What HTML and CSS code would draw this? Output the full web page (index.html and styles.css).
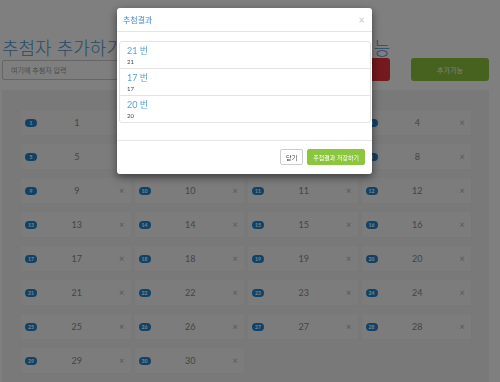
FILE: index.html
```html
<!DOCTYPE html>
<html lang="ko">
<head>
    <meta charset="UTF-8">
    <meta name="viewport" content="width=device-width, initial-scale=1.0">
    <title>추첨</title>
    <link rel="stylesheet" href="styles.css">
</head>
<body>
    <div class="page">
        <div class="top">
            <h1 class="title">추첨자 추가하기</h1>
            <h1 class="title title-draw">추첨기능</h1>
            <div></div>
            <input class="name-input" type="text" placeholder="여기에 추첨자 입력">
            <button class="btn btn-red">추첨하기</button>
            <button class="btn btn-green">추가기능</button>
        </div>

        <div class="well">
            <div class="card-grid" id="card-grid"></div>
        </div>
    </div>

    <!-- modal is open -->
    <div class="backdrop"></div>
    <div class="modal">
        <div class="modal-header">
            <span class="modal-title">추첨결과</span>
            <span class="modal-close">&times;</span>
        </div>
        <div class="modal-body">
            <div class="list-group">
                <div class="list-item">
                    <div class="item-heading">21 번</div>
                    <div class="item-text">21</div>
                </div>
                <div class="list-item">
                    <div class="item-heading">17 번</div>
                    <div class="item-text">17</div>
                </div>
                <div class="list-item">
                    <div class="item-heading">20 번</div>
                    <div class="item-text">20</div>
                </div>
            </div>
        </div>
        <div class="modal-footer">
            <button class="btn-sm btn-default">닫기</button>
            <button class="btn-sm btn-save">추첨결과 저장하기</button>
        </div>
    </div>

    <script>
        // build the 30 entries
        const grid = document.getElementById('card-grid');
        for (let i = 1; i <= 30; i++) {
            const card = document.createElement('div');
            card.className = 'card';
            card.innerHTML =
                '<span class="badge">' + i + '</span>' +
                '<span class="card-name">' + i + '</span>' +
                '<span class="card-remove">&times;</span>';
            grid.appendChild(card);
        }
    </script>
</body>
</html>
```

FILE: styles.css
```css
body {
    margin: 0;
    background-color: #ffffff;
    font-family: Lato, "Noto Sans CJK KR", sans-serif;
    color: #555;
}

.page {
    padding: 36px 11px 0 2px;
}

/* top controls */
.top {
    display: grid;
    grid-template-columns: minmax(0, 1fr) 70px 78px;
    column-gap: 21px;
}

.title {
    margin: 0;
    font-family: "Noto Sans CJK KR", sans-serif;
    font-size: 18px;
    font-weight: 300;
    line-height: 22px;
    color: #4f97d0;
    white-space: nowrap;
}

.title-draw {
    margin-left: 4px;
}

.name-input {
    align-self: center;
    height: 20px;
    box-sizing: border-box;
    border: 1px solid #ccc;
    border-radius: 2px;
    padding: 0 8px;
    font-family: "Noto Sans CJK KR", sans-serif;
    font-size: 7px;
    margin-top: 1px;
}

.name-input::placeholder {
    color: #999;
}

.btn {
    height: 23px;
    border: none;
    border-radius: 3px;
    color: #fff;
    font-family: "Noto Sans CJK KR", sans-serif;
    font-size: 7px;
}

.btn-red {
    background-color: #e8353c;
}

.btn-green {
    background-color: #8cc43c;
}

/* list of people */
.well {
    margin-top: 9px;
    background-color: #f3f3f3;
    padding: 19px 17px 20px 18px;
}

.card-grid {
    display: grid;
    grid-template-columns: repeat(4, 1fr);
    column-gap: 2px;
    row-gap: 7px;
}

.card {
    display: flex;
    align-items: center;
    height: 27px;
    background-color: #f8f8f8;
    border: 1px solid #f0f0f0;
    box-sizing: border-box;
    padding: 0 4px 0 4px;
}

.badge {
    min-width: 8px;
    padding: 1px 2px;
    border-radius: 4px;
    background-color: #2185d0;
    color: #fff;
    font-size: 5px;
    line-height: 6px;
    text-align: center;
    font-weight: 700;
}

.card-name {
    flex: 1;
    text-align: center;
    font-size: 9px;
    color: #8a8a8a;
}

.card-remove {
    width: 10px;
    text-align: center;
    font-size: 9px;
    color: #b0b0b0;
}

/* modal */
.backdrop {
    position: fixed;
    inset: 0;
    background-color: rgba(0, 0, 0, 0.5);
}

.modal {
    position: fixed;
    left: 117px;
    top: 8px;
    width: 255px;
    background-color: #fff;
    border-radius: 3px;
    box-shadow: 0 3px 9px rgba(0, 0, 0, 0.5);
    font-family: Lato, "Noto Sans CJK KR", sans-serif;
}

.modal-header {
    display: flex;
    align-items: center;
    justify-content: space-between;
    height: 23px;
    padding: 0 7px 0 6px;
    border-bottom: 1px solid #e5e5e5;
}

.modal-title {
    font-size: 8px;
    color: #4a8cc4;
}

.modal-close {
    font-size: 11px;
    color: #c8c8c8;
}

.modal-body {
    padding: 9px 1px 17px 2px;
}

.list-group {
    border: 1px solid #e3e3e3;
    border-radius: 3px;
}

.list-item {
    height: 26px;
    padding: 2px 7px 0;
    box-sizing: border-box;
}

.list-item + .list-item {
    border-top: 1px solid #e3e3e3;
    height: 27px;
}

.item-heading {
    font-size: 9px;
    line-height: 13px;
    color: #5aa2d8;
}

.item-text {
    font-size: 6px;
    line-height: 9px;
    color: #444;
}

.modal-footer {
    display: flex;
    justify-content: flex-end;
    gap: 4px;
    padding: 8px 7px 9px;
    border-top: 1px solid #e5e5e5;
}

.btn-sm {
    height: 16px;
    border-radius: 2px;
    font-family: "Noto Sans CJK KR", sans-serif;
    font-size: 6px;
    padding: 0 5px;
}

.btn-default {
    background-color: #fff;
    border: 1px solid #ccc;
    color: #333;
}

.btn-save {
    background-color: #8cc63e;
    border: 1px solid #8cc63e;
    color: #fff;
}
```
